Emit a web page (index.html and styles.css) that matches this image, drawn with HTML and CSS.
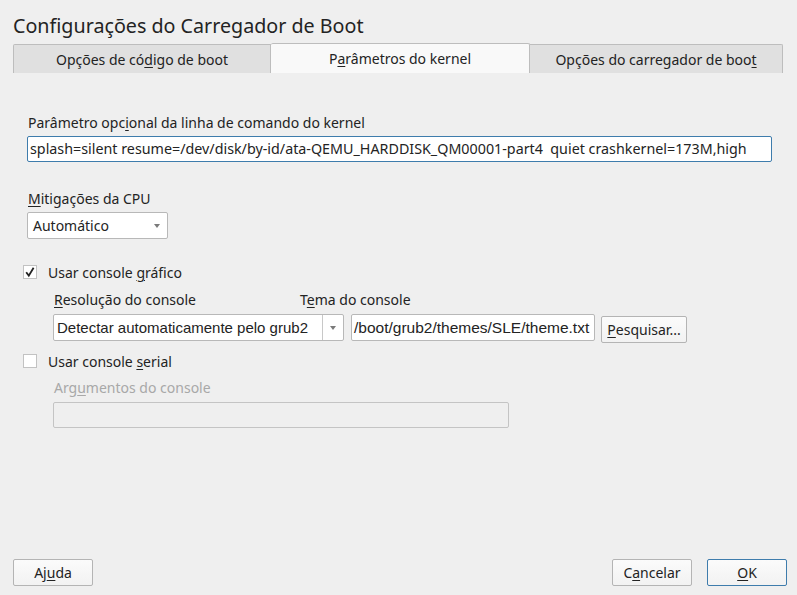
FILE: index.html
```html
<!DOCTYPE html>
<html lang="pt">
<head>
<meta charset="utf-8">
<title>Configurações do Carregador de Boot</title>
<link rel="stylesheet" href="styles.css">
</head>
<body>
<div class="dialog">
  <h1 class="title">Configurações do Carregador de Boot</h1>
  <div class="tabs">
    <div class="tab tab-1">Opções de có<u>d</u>igo de boot</div>
    <div class="tab tab-2 active">P<u>a</u>râmetros do kernel</div>
    <div class="tab tab-3">Opções do carregador de boo<u>t</u></div>
  </div>
  <div class="panel">
    <div class="field kernel">
      <label class="label">Parâmetro opc<u>i</u>onal da linha de comando do kernel</label>
      <div class="input focused">splash=silent resume=/dev/disk/by-id/ata-QEMU_HARDDISK_QM00001-part4&nbsp; quiet crashkernel=173M,high</div>
    </div>
    <div class="field cpu">
      <label class="label"><u>M</u>itigações da CPU</label>
      <div class="combo small">
        <span class="combo-text">Automático</span>
        <span class="arrow"></span>
      </div>
    </div>
    <div class="check-row gfx">
      <span class="checkbox"><svg viewBox="0 0 14 14" width="14" height="14"><path d="M3.2 7.2 L5.8 10.6 L10.6 2.8" fill="none" stroke="#222" stroke-width="1.8"/></svg></span>
      <span class="check-label">Usar console <u>g</u>ráfico</span>
    </div>
    <div class="sub-row">
      <div class="sub-col res">
        <label class="label"><u>R</u>esolução do console</label>
        <div class="combo wide">
          <span class="combo-text arial">Detectar automaticamente pelo grub2</span>
          <span class="combo-btn"><span class="arrow"></span></span>
        </div>
      </div>
      <div class="sub-col theme">
        <label class="label">T<u>e</u>ma do console</label>
        <div class="theme-row">
          <div class="input theme-input arial">/boot/grub2/themes/SLE/theme.txt</div>
          <button class="btn browse"><u>P</u>esquisar...</button>
        </div>
      </div>
    </div>
    <div class="check-row serial">
      <span class="checkbox"></span>
      <span class="check-label">Usar console <u>s</u>erial</span>
    </div>
    <div class="sub-field disabled">
      <label class="label">Arg<u>u</u>mentos do console</label>
      <div class="input disabled-input"></div>
    </div>
  </div>
  <div class="footer">
    <button class="btn foot">Aj<u>u</u>da</button>
    <div class="foot-right">
      <button class="btn foot">C<u>a</u>ncelar</button>
      <button class="btn foot default"><u>O</u>K</button>
    </div>
  </div>
</div>
</body>
</html>
```
FILE: styles.css
```css
* { box-sizing: border-box; }
html, body { margin: 0; padding: 0; }
body {
  background: #efefef;
  font-family: "Noto Sans", "Open Sans", sans-serif;
  font-size: 14px;
  color: #232323;
  width: 797px;
  height: 595px;
  overflow: hidden;
}
u { text-decoration: underline; text-underline-offset: 2px; text-decoration-thickness: 1px; }
.dialog {
  height: 595px;
  display: flex;
  flex-direction: column;
}
.title {
  margin: 12px 0 0 13px;
  font-size: 19.7px;
  font-weight: normal;
  line-height: 28px;
  color: #232323;
}
.tabs {
  display: flex;
  margin: 3px 0 0 13px;
  height: 30px;
  align-items: flex-end;
}
.tab {
  height: 29px;
  background: #e0e0e0;
  border: 1px solid #bdbdbd;
  border-bottom: none;
  display: flex;
  align-items: center;
  justify-content: center;
  color: #232323;
}
.tab-1 { width: 258px; border-top-left-radius: 2px; }
.tab-2 { width: 259px; }
.tab-3 { width: 253px; border-left: none; border-top-right-radius: 2px; }
.tab.active {
  height: 30px;
  background: #f9f9f9;
  border-left: none;
  border-top-left-radius: 2px;
  border-top-right-radius: 2px;
}
.panel {
  padding: 40px 25px 0 27px;
  display: flex;
  flex-direction: column;
}
.label { display: block; line-height: 20px; margin-left: 1px; }
.input {
  background: #fff;
  border: 1px solid #b8b8b8;
  border-radius: 2px;
  height: 26px;
  line-height: 24px;
  padding: 0 3px;
  white-space: nowrap;
  overflow: hidden;
}
.kernel .label { margin-bottom: 3px; }
.input.focused { border-color: #3e7cac; font-size: 14.3px; padding-left: 2px; }
.cpu { margin-top: 27px; }
.cpu .label { margin-bottom: 3px; }
.combo {
  background: #fff;
  border: 1px solid #b8b8b8;
  border-radius: 2px;
  height: 27px;
  display: flex;
  align-items: center;
}
.combo.small { width: 141px; padding-left: 5px; justify-content: space-between; padding-right: 7px; }
.combo-text { line-height: 25px; }
.arrow {
  width: 0; height: 0;
  border-left: 3.5px solid transparent;
  border-right: 3.5px solid transparent;
  border-top: 4px solid #7a7a7a;
}
.check-row {
  display: flex;
  align-items: center;
  margin-left: -4px;
  height: 20px;
}
.gfx { margin-top: 23px; }
.checkbox {
  width: 14px; height: 14px;
  background: #fff;
  border: 1px solid #c2c2c2;
  display: inline-flex;
  margin-right: 11px;
}
.checkbox svg { margin: -1px; }
.sub-row {
  display: flex;
  margin-left: 26px;
  margin-top: 8px;
}
.sub-col .label { margin-bottom: 4px; }
.res { width: 247px; }
.combo.wide { width: 291px; padding-left: 3px; }
.combo.wide .combo-text { flex: 1; font-size: 15px; }
.arial { font-family: "Liberation Sans", Arial, sans-serif; font-size: 15px; }
.combo-btn {
  width: 21px;
  height: 25px;
  border-left: 1px solid #c8c8c8;
  display: flex;
  align-items: center;
  justify-content: center;
}
.theme-row { display: flex; align-items: flex-start; margin-left: 51px; }
.theme .label { margin-left: 0; }
.theme-input { width: 244px; height: 27px; padding: 0 2px; line-height: 25px; font-size: 15.5px; }
.btn {
  font-family: "Noto Sans", "Open Sans", sans-serif;
  font-size: 14px;
  color: #232323;
  background: linear-gradient(#fbfbfb, #f2f2f2);
  border: 1px solid #b4b4b4;
  border-radius: 2px;
  padding: 0;
  height: 27px;
}
.browse { width: 86px; margin-left: 6px; margin-top: 2px; }
.serial { margin-top: 8px; }
.sub-field { margin-left: 26px; margin-top: 7px; }
.disabled .label { color: #a8a8a8; margin-bottom: 4px; }
.disabled-input { width: 456px; background: #efefef; border-color: #c4c4c4; }
.footer {
  margin-top: auto;
  display: flex;
  justify-content: space-between;
  padding: 0 10px 9px 13px;
}
.foot { width: 80px; height: 27px; }
.foot-right { display: flex; gap: 15px; }
.default { border-color: #3e7cac; }
```
